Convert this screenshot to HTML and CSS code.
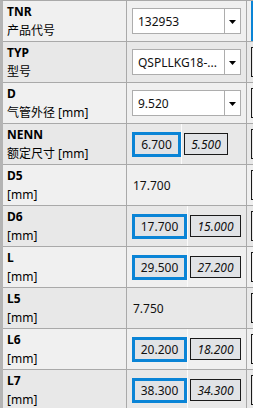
FILE: index.html
```html
<!DOCTYPE html>
<html lang="zh">
<head>
    <meta charset="UTF-8">
    <meta name="viewport" content="width=device-width, initial-scale=1.0">
    <title>Parameters</title>
    <link rel="stylesheet" href="styles.css">
</head>
<body>
    <div class="grid">
        <div class="row">
            <div class="label"><b>TNR</b><span>产品代号</span></div>
            <div class="value">
                <div class="combo"><span class="combo-text">132953</span><span class="combo-btn"><svg width="7" height="4" viewBox="0 0 7 4"><path d="M0 0h7L3.5 4z"/></svg></span></div>
            </div>
            <div class="extra"><div class="extra-box selected"></div></div>
        </div>
        <div class="row">
            <div class="label"><b>TYP</b><span>型号</span></div>
            <div class="value">
                <div class="combo"><span class="combo-text">QSPLLKG18-...</span><span class="combo-btn"><svg width="7" height="4" viewBox="0 0 7 4"><path d="M0 0h7L3.5 4z"/></svg></span></div>
            </div>
            <div class="extra"><div class="extra-box"></div></div>
        </div>
        <div class="row">
            <div class="label"><b>D</b><span>气管外径 [mm]</span></div>
            <div class="value">
                <div class="combo"><span class="combo-text">9.520</span><span class="combo-btn"><svg width="7" height="4" viewBox="0 0 7 4"><path d="M0 0h7L3.5 4z"/></svg></span></div>
            </div>
            <div class="extra"><div class="extra-box"></div></div>
        </div>
        <div class="row">
            <div class="label"><b>NENN</b><span>额定尺寸 [mm]</span></div>
            <div class="value split narrow">
                <div class="cell-main"><span class="num-box">6.700</span></div>
                <div class="cell-alt"><span class="alt-box">5.500</span></div>
            </div>
            <div class="extra"><div class="extra-box"></div></div>
        </div>
        <div class="row">
            <div class="label"><b>D5</b><span>[mm]</span></div>
            <div class="value plain">17.700</div>
            <div class="extra"><div class="extra-box"></div></div>
        </div>
        <div class="row">
            <div class="label"><b>D6</b><span>[mm]</span></div>
            <div class="value split">
                <div class="cell-main"><span class="num-box">17.700</span></div>
                <div class="cell-alt"><span class="alt-box">15.000</span></div>
            </div>
            <div class="extra"><div class="extra-box"></div></div>
        </div>
        <div class="row">
            <div class="label"><b>L</b><span>[mm]</span></div>
            <div class="value split">
                <div class="cell-main"><span class="num-box">29.500</span></div>
                <div class="cell-alt"><span class="alt-box">27.200</span></div>
            </div>
            <div class="extra"><div class="extra-box"></div></div>
        </div>
        <div class="row">
            <div class="label"><b>L5</b><span>[mm]</span></div>
            <div class="value plain">7.750</div>
            <div class="extra"><div class="extra-box"></div></div>
        </div>
        <div class="row">
            <div class="label"><b>L6</b><span>[mm]</span></div>
            <div class="value split">
                <div class="cell-main"><span class="num-box">20.200</span></div>
                <div class="cell-alt"><span class="alt-box">18.200</span></div>
            </div>
            <div class="extra"><div class="extra-box"></div></div>
        </div>
        <div class="row">
            <div class="label"><b>L7</b><span>[mm]</span></div>
            <div class="value split">
                <div class="cell-main"><span class="num-box">38.300</span></div>
                <div class="cell-alt"><span class="alt-box">34.300</span></div>
            </div>
            <div class="extra"><div class="extra-box"></div></div>
        </div>
    </div>
</body>
</html>
```

FILE: styles.css
```css
* {
    box-sizing: border-box;
}

body {
    margin: 0;
    background-color: #f0f0f0;
    font-family: "Noto Sans", "Noto Sans CJK SC", sans-serif;
    font-size: 12px;
    color: #111;
}

.grid {
    width: 253px;
    border-top: 1px solid #a9a9a9;
    border-left: 3px solid #b4b4b4;
    overflow: hidden;
}

.row {
    display: flex;
    height: 41px;
    border-bottom: 1px solid #a9a9a9;
    background-color: #f0f0f0; /* light rows */
}

.row:nth-child(even) {
    background-color: #e8e8e8; /* darker rows */
}

.label {
    width: 124px;
    flex-shrink: 0;
    padding: 1px 0 0 4px;
    border-right: 1px solid #a9a9a9;
    display: flex;
    flex-direction: column;
    line-height: 19px;
    color: #000;
}

.value {
    width: 120px;
    flex-shrink: 0;
    border-right: 1px solid #a9a9a9;
    display: flex;
    align-items: center;
    padding: 0 5px;
}

.value.plain {
    padding-left: 6px;
}

/* combobox */
.combo {
    width: 109px;
    height: 26px;
    background-color: #fff;
    border: 1px solid #adadad;
    display: flex;
    align-items: center;
}

.combo-text {
    flex: 1;
    padding-left: 5px;
    white-space: nowrap;
    overflow: hidden;
}

.combo-btn {
    width: 16px;
    height: 100%;
    border-left: 1px solid #adadad;
    display: flex;
    align-items: center;
    justify-content: center;
    padding-top: 2px;
}

/* value + reference value */
.value.split {
    padding: 0;
}

.cell-main {
    height: 100%;
    padding-left: 5px;
    border-right: 1px solid #fbfbfb;
    display: flex;
    align-items: center;
}

.cell-alt {
    height: 100%;
    padding-left: 2px;
    display: flex;
    align-items: center;
}

.num-box {
    width: 55px;
    height: 25px;
    border: 3px solid #0a84d6;
    background-color: #e1e3e6;
    display: flex;
    align-items: center;
    justify-content: center;
}

.alt-box {
    width: 51px;
    height: 22px;
    border: 1px solid #1a1a1a;
    background-color: #e1e3e6;
    font-style: italic;
    display: flex;
    align-items: center;
    justify-content: center;
}

.narrow .num-box {
    width: 49px;
}

.narrow .alt-box {
    width: 44px;
}

/* cut-off third column */
.extra {
    flex: 1;
    padding-left: 4px;
    display: flex;
    align-items: center;
}

.extra-box {
    width: 20px;
    height: 30px;
    border: 1px solid #1a1a1a;
}

.extra-box.selected {
    height: 100%;
    border: none;
    background-color: #0a84d6;
}
```
